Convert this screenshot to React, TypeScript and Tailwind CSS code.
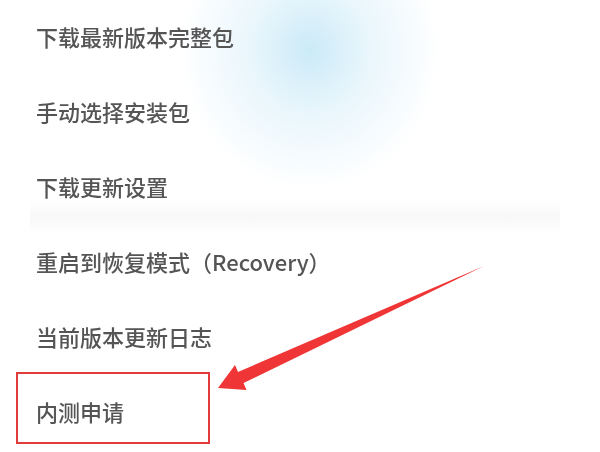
const items = [
  "下载最新版本完整包",
  "手动选择安装包",
  "下载更新设置",
  "重启到恢复模式（Recovery）",
  "当前版本更新日志",
  "内测申请",
];

export default function App() {
  return (
    <div className="relative w-[600px] h-[452px] overflow-hidden bg-white font-['Noto_Sans_CJK_SC','Noto_Sans',sans-serif]">
      {/* soft blue glow behind the top rows */}
      <div className="absolute left-[180px] top-[-90px] w-[260px] h-[280px] rounded-full bg-[radial-gradient(closest-side,rgba(200,233,247,0.95)_0%,rgba(218,240,250,0.6)_45%,rgba(255,255,255,0)_100%)]" />
      {/* faint grey band under the third row */}
      <div className="absolute left-[30px] top-[200px] w-[530px] h-[34px] bg-[linear-gradient(to_bottom,rgba(246,246,246,0),rgba(246,246,246,0.8)_50%,rgba(246,246,246,0))]" />

      <ul className="relative -mt-[2px]">
        {items.map((label) => (
          <li key={label} className="h-[75px] flex items-center pl-[36px]">
            <span className="text-[22px] leading-none font-medium text-[#555555] blur-[0.5px]">{label}</span>
          </li>
        ))}
      </ul>

      {/* annotation: red box and arrow */}
      <div className="absolute left-[16px] top-[372px] w-[194px] h-[72px] border-2 border-[#e23b3b]" />
      <svg className="absolute inset-0" width="600" height="452" viewBox="0 0 600 452">
        <polygon
          points="484,266 243.5,383 246.5,390 218,388 235,365 238,372 484,266"
          fill="#ef3535"
        />
      </svg>
    </div>
  );
}
